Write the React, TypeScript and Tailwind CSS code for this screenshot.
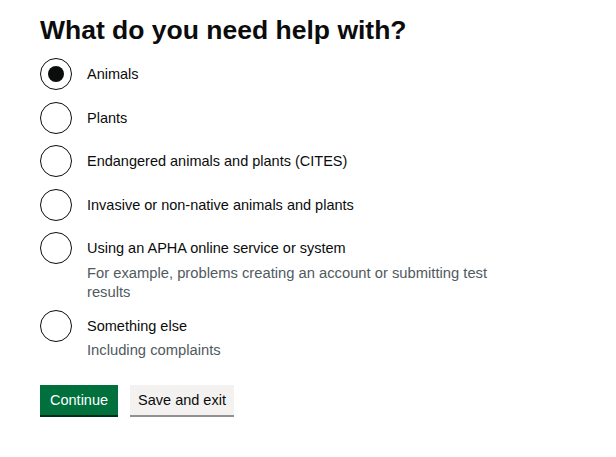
const FONT = "font-['Liberation_Sans',Arial,sans-serif]";

type Option = {
  label: string;
  hint?: string;
  checked?: boolean;
};

const options: Option[] = [
  { label: 'Animals', checked: true },
  { label: 'Plants' },
  { label: 'Endangered animals and plants (CITES)' },
  { label: 'Invasive or non-native animals and plants' },
  {
    label: 'Using an APHA online service or system',
    hint: 'For example, problems creating an account or submitting test results',
  },
  { label: 'Something else', hint: 'Including complaints' },
];

function Radio({ label, hint, checked }: Option) {
  return (
    <div className="flex items-start">
      <span className="flex w-8 h-8 shrink-0 items-center justify-center rounded-full border-[1.5px] border-[#0b0c0c] bg-white">
        {checked && <span className="w-4 h-4 rounded-full bg-[#0b0c0c]" />}
      </span>
      <div className="ml-[15px] pt-[6px] max-w-[420px]">
        <p className="text-[14.5px] leading-[20px] text-[#0b0c0c]">{label}</p>
        {hint && (
          <p className="mt-[5.5px] mb-[-3.5px] text-[14.75px] leading-[19px] text-[#505a5f]">{hint}</p>
        )}
      </div>
    </div>
  );
}

export default function App() {
  return (
    <div className={`${FONT} min-h-screen bg-white pl-10 pt-[14px]`}>
      <h1 className="text-[26.5px] leading-[32px] font-bold text-[#0b0c0c]">
        What do you need help with?
      </h1>

      {/* Radio list */}
      <div className="mt-3 flex flex-col gap-[11.5px]">
        {options.map((o) => (
          <Radio key={o.label} {...o} />
        ))}
      </div>

      {/* Actions */}
      <div className="mt-[28px] flex gap-3">
        <button className="px-[10px] py-[5px] text-[14.5px] leading-[20px] text-white bg-[#00703c] shadow-[0_2px_0_#002d18]">
          Continue
        </button>
        <button className="px-[8px] py-[5px] text-[14.5px] leading-[20px] text-[#0b0c0c] bg-[#f3f2f1] shadow-[0_2px_0_#929191]">
          Save and exit
        </button>
      </div>
    </div>
  );
}
